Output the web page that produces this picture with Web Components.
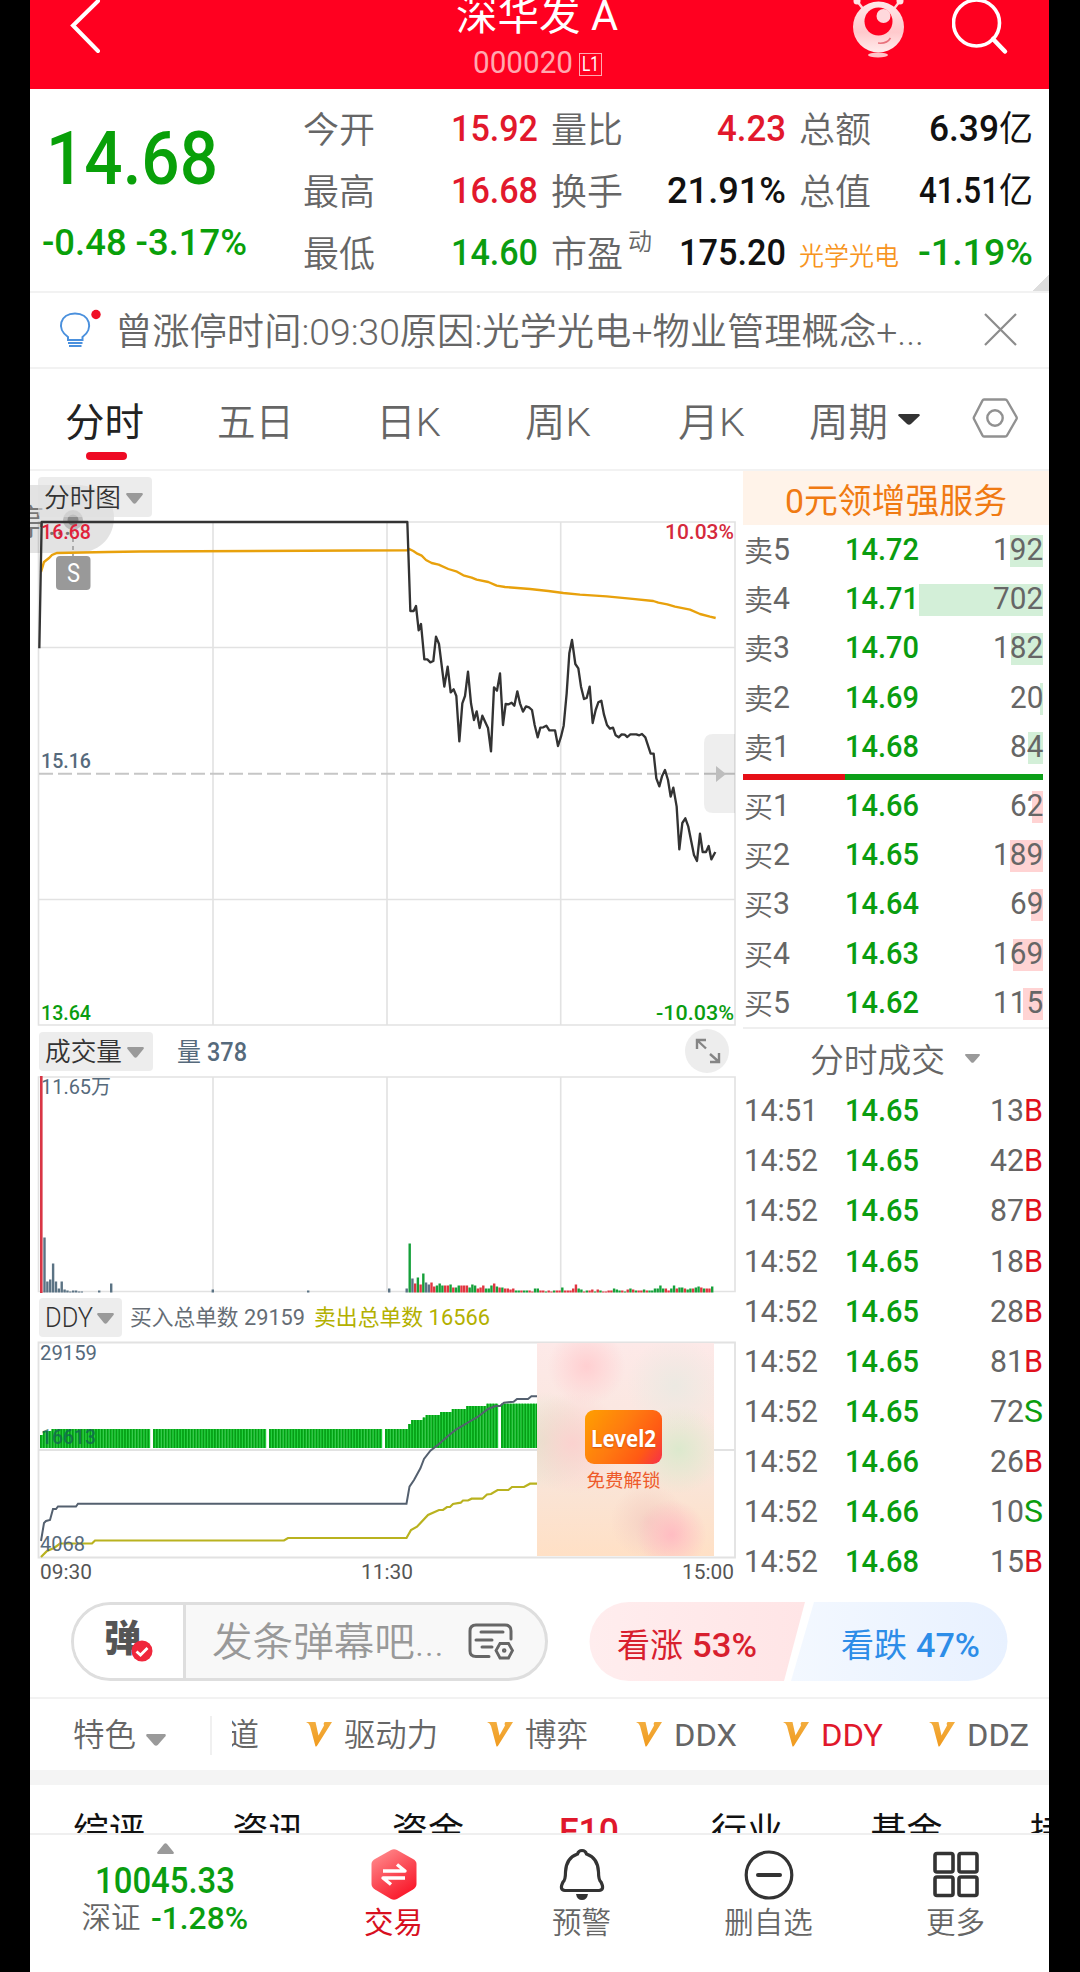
<!DOCTYPE html>
<html lang="zh-CN">
<head>
<meta charset="utf-8">
<title>深华发A 000020</title>
<style>
html, body { margin: 0; background: #000; }
body { width: 1080px; height: 1972px; overflow: hidden; }
</style>
</head>
<body>
<stock-page></stock-page>

<script>
const define = (name, html, setup) => {
    const template = document.createElement("template");
    template.innerHTML = html;
    customElements.define(name, class extends HTMLElement {
        constructor() {
            super();
            this.attachShadow({ mode: "open" });
        }
        connectedCallback() {
            if (this.shadowRoot.firstChild) return;
            this.shadowRoot.appendChild(template.content.cloneNode(true));
            if (setup) setup(this, this.shadowRoot);
        }
    });
};

define("fit-text", `
<style>
:host { display: inline-block; white-space: nowrap; text-align: left; flex: none; }
span { display: inline-block; transform-origin: 0 50%; }
</style>
<span><slot></slot></span>`, (host, root) => {
    const width = Number(host.getAttribute("w"));
    const span = root.querySelector("span");
    const natural = span.getBoundingClientRect().width;
    host.style.width = width + "px";
    if (natural) span.style.transform = `scaleX(${width / natural})`;
});

define("down-arrow", `
<style>
:host { display: block; flex: none; width: 17px; height: 11px; color: #9a9a9a; }
svg { display: block; width: 100%; height: 100%; }
</style>
<svg viewBox="0 0 17 11" preserveAspectRatio="none"><path d="M1 0H16Q17.500 .5 16.500 2L10 10Q8.500 11.500 7 10L.5 2Q-.5.5 1 0Z" fill="currentColor"/></svg>`);

define("app-header", `
<style>
:host { display: grid; grid-template-columns: 300px 1fr 300px; height: 89px; background: #ff0020; color: #fff; overflow: hidden; }
.back { padding-left: 38px; }
.mid { display: flex; flex-direction: column; align-items: center; margin-top: -9px; margin-left: -5px; }
.name { font-size: 42px; line-height: 50px; height: 50px; }
.code { display: flex; align-items: center; height: 42px; font-size: 32px; gap: 6px; color: #ffa9b0; }
.lv { box-sizing: border-box; width: 23px; height: 23px; border: 1px solid #ffa9b0; font-size: 20px; line-height: 21px; padding-left: 2px; margin-top: 4px; color: #fff; }
.right { display: flex; gap: 43px; padding-left: 100px; }
svg { display: block; flex: none; }
</style>
<div class="back"><svg width="40" height="60" fill="none" stroke="#fff" stroke-width="4"><path d="M30 1L5 25.500L30 51" stroke-linecap="round"/></svg></div>
<div class="mid">
  <div class="name"><fit-text w="162">深华发 A</fit-text></div>
  <div class="code"><fit-text w="100">000020</fit-text><div class="lv"><fit-text w="17">L1</fit-text></div></div>
</div>
<div class="right">
  <svg width="60" height="62" viewBox="849 0 60 62">
    <defs><linearGradient id="g" x1="0" y1="0" x2="0" y2="1"><stop stop-color="#ffe9ea"/><stop offset=".6" stop-color="#ffc9cc"/><stop offset="1" stop-color="#ffeded"/></linearGradient></defs>
    <path d="M857 1l7 9M900 1l-7 9" stroke="#ffd6d8" stroke-width="2.500"/>
    <circle cx="857" cy="1" r="3.500" fill="#ffe5e6"/><circle cx="900" cy="1" r="3.500" fill="#ffe5e6"/>
    <circle cx="878.500" cy="27" r="25.500" fill="url(#g)"/>
    <circle cx="878.500" cy="21.500" r="14" fill="#ff0020"/>
    <circle cx="883.500" cy="16" r="7" fill="#ffd8dc"/>
    <path d="M878 43Q887 44 890.500 38" stroke="#e8727c" stroke-width="1.500" fill="none"/>
    <ellipse cx="878" cy="55" rx="10" ry="2.500" fill="#ffc5c9"/>
  </svg>
  <svg width="58" height="58" viewBox="952 0 58 58" fill="none" stroke="#fff" stroke-width="3.600"><circle cx="976.500" cy="23" r="23"/><path d="M993 39L1005 51.500" stroke-linecap="round" stroke-width="4.500"/></svg>
</div>`);

define("quote-cell", `
<style>
:host { display: flex; justify-content: space-between; align-items: center; height: 62px; color: #666; font-size: 36px; }
.label { position: relative; top: 3px; font-weight: 350; }
.value { font-weight: 500; font-size: 37px; }
</style>
<span class="label"><slot name="label"></slot></span><span class="value"><slot></slot></span>`);

define("quote-panel", `
<style>
:host { position: relative; display: grid; grid-template-columns: 273px 235px 235px 234px; column-gap: 13px; box-sizing: border-box; height: 204px; border-bottom: 2px solid #f2f2f2; padding-top: 9px; }
.last { color: #09a009; padding-left: 13px; font-weight: 500; }
.price { font-size: 75px; line-height: 96px; height: 96px; padding: 11px 0 0 3px; margin-top: 1px; }
.diff { font-size: 37px; line-height: 50px; padding-top: 12px; margin-left: -1px; }
.red { color: #e2182c; } .green { color: #0a9d10; } .black { color: #111; }
.tip { position: relative; top: -17px; font-size: 24px; margin-left: 5px; line-height: 1; }
.sector { color: #f79420; font-size: 25px; position: relative; top: -2px; }
.corner { position: absolute; right: 0; bottom: 0; width: 16px; height: 16px; background: linear-gradient(135deg, transparent 50%, #ddd 50%); }
.c1, .c2, .c3 { margin: 0 13px 0 -13px; }
</style>
<div class="last">
  <div class="price"><fit-text w="172">14.68</fit-text></div>
  <div class="diff"><fit-text w="205">-0.48 -3.17%</fit-text></div>
</div>
<div class="c1">
  <quote-cell><span slot="label">今开</span><fit-text class="red" w="87">15.92</fit-text></quote-cell>
  <quote-cell><span slot="label">最高</span><fit-text class="red" w="87">16.68</fit-text></quote-cell>
  <quote-cell><span slot="label">最低</span><fit-text class="green" w="87">14.60</fit-text></quote-cell>
</div>
<div class="c2">
  <quote-cell><span slot="label">量比</span><fit-text class="red" w="69">4.23</fit-text></quote-cell>
  <quote-cell><span slot="label">换手</span><fit-text class="black" w="119">21.91%</fit-text></quote-cell>
  <quote-cell><span slot="label">市盈<span class="tip">动</span></span><fit-text class="black" w="107">175.20</fit-text></quote-cell>
</div>
<div class="c3">
  <quote-cell><span slot="label">总额</span><span class="black"><fit-text w="70">6.39</fit-text><fit-text w="34" style="font-size:35px;font-weight:400">亿</fit-text></span></quote-cell>
  <quote-cell><span slot="label">总值</span><span class="black"><fit-text w="80">41.51</fit-text><fit-text w="34" style="font-size:35px;font-weight:400">亿</fit-text></span></quote-cell>
  <quote-cell><span slot="label" class="sector">光学光电</span><fit-text class="green" w="115">-1.19%</fit-text></quote-cell>
</div>
<i class="corner"></i>`);

define("notice-bar", `
<style>
:host { display: flex; align-items: center; box-sizing: border-box; height: 76px; border-bottom: 2px solid #f2f2f2; padding-left: 29px; color: #666; font-size: 37px; font-weight: 350; }
svg { display: block; flex: none; }
.text { margin-left: 13px; padding-top: 6px; width: 869px; flex: none; }
</style>
<svg width="43" height="44" viewBox="59 309 43 44" fill="none"><path d="M68 341V338C56 330 60 314.500 75 314.500S94 330 82.500 338V341Z" stroke="#4a90dd" stroke-width="2"/><path d="M68 344H82.500M69 347H81.500" stroke="#4a90dd" stroke-width="2"/><circle cx="96" cy="315.500" r="4.700" fill="#f01026"/></svg>
<div class="text"><fit-text w="809">曾涨停时间:09:30原因:光学光电+物业管理概念+...</fit-text></div>
<svg width="34" height="34" stroke="#8c8c8c" stroke-width="2.200"><path d="M1 1L32 32M32 1L1 32"/></svg>`);

define("period-tabs", `
<style>
:host { display: flex; box-sizing: border-box; height: 102px; border-bottom: 2px solid #f2f2f2; color: #666; font-size: 39px; font-weight: 350; padding-left: 35px; align-items: center; line-height: 60px; padding-top: 8px; }
div { position: relative; flex: none; }
.on { color: #222; font-weight: 400; }
.on::after { content: ""; position: absolute; left: 21px; bottom: -7px; width: 41px; height: 8px; border-radius: 4px; background: #ee0a24; }
down-arrow { width: 22px; height: 11px; color: #333; margin: -8px 51px 0 10px; }
svg { flex: none; margin-top: -10px; }
</style>
<div class="on" style="width:152px"><fit-text w="79">分时</fit-text></div>
<div style="width:159px"><fit-text w="77">五日</fit-text></div>
<div style="width:149px"><fit-text w="65">日K</fit-text></div>
<div style="width:153px"><fit-text w="66">周K</fit-text></div>
<div style="width:131px"><fit-text w="67">月K</fit-text></div>
<div><fit-text w="79">周期</fit-text></div>
<down-arrow></down-arrow>
<svg width="48" height="44" viewBox="970 397 48 44" fill="none" stroke="#919191" stroke-width="2.400"><path d="M983 400.500H1004Q1005.500 400.500 1006 401.500L1015.500 418Q1016 419 1015.500 420L1006 436.500Q1005.500 437.500 1004 437.500H983Q982 437.500 981.500 436.500L973 420Q972.500 419 973 418L981.500 401.500Q982 400.500 983 400.500Z"/><circle cx="994" cy="419" r="7.700"/></svg>`);

define("pick-button", `
<style>
:host { display: flex; align-items: center; box-sizing: border-box; height: 39px; padding: 3px 9px 0 6px; gap: 5px; border-radius: 4px; background: #ededed; color: #333; font-size: 26px; font-weight: 350; flex: none; }
</style>
<slot></slot><down-arrow></down-arrow>`);

define("price-chart", `
<style>
:host { position: relative; display: block; height: 555px; }
.head { display: flex; height: 50px; padding: 6px 0 0 8px; box-sizing: border-box; position: relative; z-index: 1; }
pick-button { height: 40px; background: rgba(224,224,224,.6); }
svg { position: absolute; left: 0; top: 0; }
text { font-size: 20.500px; }
</style>
<div class="head"><pick-button><fit-text w="77">分时图</fit-text></pick-button></div>
<svg width="706" height="557" viewBox="30 471 706 557" fill="none">
  <g stroke="#e2e2e2" stroke-width="1.600"><path d="M38.500 522H735V1025H38.500ZM39 647.500H735M39 899.500H735M213 522V1025M387 522V1025M560.700 522V1025"/></g>
  <path d="M39 773.700H735" stroke="#c6c6c6" stroke-width="2" stroke-dasharray="14 5"/>
  <path d="M30 485H80C102 487 114 501 114 518S102 551 80 553H30Z" fill="#000" fill-opacity=".11"/>
  <g fill="#777"><text x="9" y="535" style="font-size:35px;font-weight:350">停</text><text x="48" y="535" style="font-size:30px">...</text></g>
  <circle cx="73" cy="520" r="10" fill="#999" fill-opacity=".55"/><circle cx="73" cy="520" r="5.500" fill="#8a8a8a"/>
  <path d="M73 530V556" stroke="#aaa" stroke-width="2" stroke-dasharray="4 4"/>
  <path d="M41 572L44 562L49 558L52 555L57 553L108 552L140 551.500L408 550.300V548.700" stroke="#e8a10c" stroke-width="2.400"/>
  <g transform="translate(380 500) scale(.33333)" stroke-width="7" stroke-linejoin="round">
    <path d="M85 146L100 153L112 161L125 167L138 180L155 189L176 194L205 207L231 215L250 226L275 233L290 239L325 246L350 257L375 261L450 267L505 273L550 279L600 284L680 289L750 296L820 303L835 308L862 313L885 320L930 329L960 342L990 350L1007 354" stroke="#e8a10c"/>
    <path d="M-1022 445L-1015 66H82L91 333H101L108 318L116 391L123 372L133 478H142L151 487L160 483L168 410L177 432L193 560L203 500L212 577L221 568L229 588L238 724L247 610L255 588L264 515L273 610L282 660L290 634L299 684L307 647L324 684L333 754L342 562L351 572L360 520L369 675L377 612L386 613L395 608L403 617L412 574L420 610L429 635L438 619L447 622L456 630L464 675L473 712L481 683L490 682L499 677L508 691H525L534 738L543 710L551 677L560 580L568 460L576 420L586 492L595 505L603 560L612 597L620 594L629 560L638 669L647 630L655 607L664 602L672 644L681 675L690 686L699 683L707 706L716 712L725 703L734 704L742 711L751 703H769L778 706L786 702L796 712L812 761H821L829 835L838 859L846 829L855 810L864 840L872 890L880 863L890 920L898 1048L907 969L916 955L925 980L942 1065L951 1083L960 1001L968 1056H978L986 1038L994 1078L1006 1056" stroke="#333"/>
  </g>
  <rect x="56" y="556" width="34.500" height="34" rx="4" fill="#999"/><text x="67" y="582" fill="#fff" style="font-size:25px" textLength="13" lengthAdjust="spacingAndGlyphs">S</text>
  <path d="M735 734H713Q704 734 704 743V804Q704 813 713 813H735Z" fill="#000" fill-opacity=".065"/><path d="M716 766L726 774L716 782Z" fill="#bdbdbd"/>
  <g font-weight="500">
    <text x="41" y="539" fill="#e0213a" textLength="50" lengthAdjust="spacingAndGlyphs">16.68</text>
    <text x="665" y="539" fill="#d5293c" textLength="69" lengthAdjust="spacingAndGlyphs">10.03%</text>
    <text x="41" y="768" fill="#566a7c" textLength="50" lengthAdjust="spacingAndGlyphs">15.16</text>
    <text x="41" y="1020" fill="#0a9d10" textLength="50" lengthAdjust="spacingAndGlyphs">13.64</text>
    <text x="656" y="1020" fill="#0a9d10" textLength="78" lengthAdjust="spacingAndGlyphs">-10.03%</text>
  </g>
</svg>`);

// one token for each minute of the afternoon: colour and height
const VOLUMES = "g49 s14 r9 g15 r8 g19 s10 s8 r10 r6 g7 g9 g7 r7 r7 g8 r5 g5 g7 r7 r7 r7 g5 g8 g7 r4 r5 r7 g4 g4 g7 r9 g6 r5 g5 r4 r4 r3 r4 g2 g2 r2 g2 g2 r2 r1 g4 g4 r2 r2 g1 r2 r1 g2 r2 r2 g5 r2 r2 r2 r4 r8 g4 g3 r1 g2 r2 r3 g1 r3 g2 r1 r1 r2 r2 g4 g3 g2 r2 g1 r3 g4 r3 g2 r2 r2 g3 r2 g2 g2 g4 g4 g7 g4 r4 r2 g4 g7 r4 g5 g5 r4 g3 g4 r4 g5 g6 r5 g4 r4 r4 g6";
const COLORS = { g: "#15a03a", r: "#e03540", s: "#5b7384" };

define("volume-chart", `
<style>
:host { display: block; height: 267px; }
.head { display: flex; align-items: center; height: 50px; padding: 0 14px 0 9px; color: #566a7c; font-size: 25px; }
.amount { flex: 1; margin: 3px 0 0 24px; }
.full { width: 44px; height: 44px; border-radius: 50%; background: #ededed; }
svg { display: block; }
</style>
<div class="head">
  <pick-button><fit-text w="77">成交量</fit-text></pick-button>
  <div class="amount"><fit-text w="24">量</fit-text> <fit-text w="40" style="font-weight:500">378</fit-text></div>
  <div class="full"><svg width="44" height="44" fill="none" stroke="#858585" stroke-width="2.400"><path d="M12 20V11H21M12.500 11.500L21 19.500M34 24V33H25M33.500 32.500L25 25"/></svg></div>
</div>
<svg width="706" height="217" viewBox="30 1076 706 217">
  <path d="M38.500 1077H735V1291.500H38.500ZM213 1077V1292M387 1077V1292M560.700 1077V1292" fill="none" stroke="#e2e2e2" stroke-width="1.600"/>
  <g id="bars"><rect x="40" y="1076" width="2.600" height="217" fill="#d93645"/></g>
  <text x="41" y="1094" fill="#566a7c" font-size="20.500" textLength="70" lengthAdjust="spacingAndGlyphs">11.65万</text>
</svg>`, (host, root) => {
    const group = root.querySelector("#bars");
    const bar = (x, height, color) => {
        group.innerHTML += `<rect x="${x}" y="${1292.5 - height}" width="2.400" height="${height}" fill="${color}"/>`;
    };
    [55, 11, 13, 29, 11, 4, 11, 3, 2, 1, 2, 2, 1, 1].forEach((h, i) => bar(43.3 + i * 2.87, h, COLORS.s));
    [[98, 2], [110, 9], [211.600, 3], [307, 2], [388, 4], [405.500, 4]].forEach(([x, h]) => bar(x, h, COLORS.s));
    const step = (711 - 408.5) / (VOLUMES.split(" ").length - 1);
    VOLUMES.split(" ").forEach((v, i) => bar(408.5 + i * step, Number(v.slice(1)), COLORS[v[0]]));
});

define("ddy-chart", `
<style>
:host { position: relative; display: block; height: 294px; }
.head { display: flex; align-items: center; height: 50px; margin-bottom: -2px; padding-left: 9px; font-size: 22px; color: #666d75; }
.head fit-text { margin-right: 9px; }
pick-button { margin-right: 8px; font-size: 27px; gap: 4px; padding-right: 8px; margin-top: -2px; }
.head pick-button fit-text { margin: 0; }
svg { display: block; }
.ad { position: absolute; left: 507px; top: 50px; width: 177px; height: 213px; display: flex; flex-direction: column; align-items: center; overflow: hidden;
  background: radial-gradient(circle at 28% 11%, #ffcfd1 0, transparent 17%), radial-gradient(circle at 76% 90%, #ffbcc2 0, transparent 15%), radial-gradient(circle at 63% 84%, #f5d0c4 0, transparent 18%), radial-gradient(circle at 20% 47%, #fbd2cf 0, transparent 28%), radial-gradient(circle at 80% 50%, #dce9cd 0, transparent 25%), radial-gradient(circle at 78% 20%, #ece9e2 0, transparent 22%), radial-gradient(circle at 4% 46%, #e2e5cd 0, transparent 24%), linear-gradient(#fde9e8, #f9e5da 60%, #ffe0c5); }
.logo { position: relative; left: -2px; margin-top: 67px; width: 77px; height: 54px; border-radius: 9px; background: linear-gradient(125deg, #ffa000, #ff7a10 45%, #ff5a14 75%, #f6304a); color: #fff; font: 700 23px/56px "Noto Sans", sans-serif; text-align: center; text-shadow: 0 1px 2px #d0500a; flex: none; }
.free { position: relative; left: -2px; margin-top: 5px; font-size: 18.500px; line-height: 24px; color: #ee5a2a; }
.axis { display: flex; justify-content: space-between; width: 694px; padding: 1px 0 0 10px; font-size: 20.500px; line-height: 24px; color: #555; }
</style>
<div class="head">
  <pick-button><fit-text w="48">DDY</fit-text></pick-button>
  <fit-text w="175">买入总单数 29159</fit-text><fit-text w="176" style="color:#b3b000">卖出总单数 16566</fit-text>
</div>
<svg width="706" height="218" viewBox="30 1341 706 218" fill="none">
  <path d="M38.500 1342.500H735V1557.500H38.500ZM39 1450H735" stroke="#e2e2e2" stroke-width="1.800"/>
  <g id="bars"></g>
  <path d="M41 1541L44 1523L46 1521L50 1520L53 1509H56L58 1506.500H76L78 1503.700H406.500L409.500 1486.700L414 1480L420.400 1468.300L424 1459L430.400 1450.700L439 1444L448 1436L456.400 1429.300L468 1422.500L478 1416.700L488 1409L495.400 1406H500L504 1402.700L513.600 1401.700L517 1399H528L531.400 1396.300H537" stroke="#54606f" stroke-width="2"/>
  <path d="M41 1557L47 1551L54 1548L60 1543.500H92L95 1540.500H284L288 1538H406.500L411 1530L417 1526.700L428 1515L439 1510H443L447 1507H450L453 1504L460.700 1502.700L463 1500.500H468L471.600 1498.700H482.400L487 1494.500L491 1494L497.600 1490H508.400L512 1487H524L530 1483.700H537" stroke="#b9b21f" stroke-width="2.200"/>
  <g fill="#566a7c" font-size="21">
    <text x="40" y="1360" textLength="57" lengthAdjust="spacingAndGlyphs">29159</text>
    <text x="41" y="1444" font-weight="500" fill="#136353" fill-opacity=".75" textLength="55" lengthAdjust="spacingAndGlyphs">16613</text>
    <text x="40" y="1551" textLength="45" lengthAdjust="spacingAndGlyphs">4068</text>
  </g>
</svg>
<div class="ad"><div class="logo"><fit-text w="65">Level2</fit-text></div><div class="free">免费解锁</div></div>
<div class="axis"><fit-text w="52">09:30</fit-text><fit-text w="52">11:30</fit-text><fit-text w="52">15:00</fit-text></div>`, (host, root) => {
    const steps = [[40, 1435], [43, 1431], [50, 1429], [408, 1424], [411, 1420], [423, 1417.5], [425, 1415], [439, 1412], [450, 1409], [467, 1406], [487, 1403.700]];
    let html = "";
    for (let x = 40; x < 536; x += 2.9) {
        if ([151.6, 267.6, 383.6, 499.6].some((gap) => Math.abs(x - gap) < 1.45)) continue;
        const top = steps.filter((s) => s[0] <= x + 1).pop()[1];
        html += `<rect x="${x}" y="${top}" width="2.900" height="${1448 - top}" fill="#22cf3c"/><rect x="${x}" y="${top}" width="1.700" height="${1448 - top}" fill="#049f14"/>`;
    }
    root.querySelector("#bars").innerHTML = html;
});

define("order-row", `
<style>
:host { position: relative; display: grid; grid-template-columns: 101px 1fr auto; align-items: center; height: 49.200px; font-size: 31px; color: #666; padding: 0 6px 0 1px; }
.bar { position: absolute; right: 6px; top: 10px; height: 32px; background: #d3efd8; }
:host([buy]) .bar { background: #ffd3d3; }
.price { color: #0a9d10; font-weight: 500; }
.price, .qty { position: relative; }
</style>
<i class="bar"></i><span class="name"></span><span class="price"></span><span class="qty"></span>`, (host, root) => {
    const [name, price, qty, bar] = host.getAttribute("data").split(",");
    root.querySelector(".bar").style.width = bar + "px";
    root.querySelector(".name").innerHTML = `<fit-text w="29" style="font-size:29px;font-weight:350;position:relative;top:2px">${name[0]}</fit-text><fit-text w="17">${name[1]}</fit-text>`;
    root.querySelector(".price").innerHTML = `<fit-text w="74">${price}</fit-text>`;
    root.querySelector(".qty").innerHTML = `<fit-text w="${qty.length * 16.7}">${qty}</fit-text>`;
});

define("order-book", `
<style>
:host { display: block; height: 558px; box-sizing: border-box; border-bottom: 2px solid #efefef; }
.promo { height: 54px; line-height: 61px; background: #fff3e9; color: #f07a12; text-align: center; font-size: 34px; font-weight: 400; }
.ratio { height: 6px; width: 300px; margin: 3px 0 1px; background: linear-gradient(90deg, #e60f17 102px, #0c9f18 102px); }
</style>
<div class="promo"><fit-text w="222">0元领增强服务</fit-text></div>
<div id="sell"></div><div class="ratio"></div><div id="buy"></div>`, (host, root) => {
    const fill = (id, attr, rows) => {
        root.querySelector(id).innerHTML = rows.map((r) => `<order-row ${attr} data="${r}"></order-row>`).join("");
    };
    fill("#sell", "", ["卖5,14.72,192,33", "卖4,14.71,702,124", "卖3,14.70,182,32", "卖2,14.69,20,3", "卖1,14.68,84,15"]);
    fill("#buy", "buy", ["买1,14.66,62,11", "买2,14.65,189,33", "买3,14.64,69,12", "买4,14.63,169,30", "买5,14.62,115,20"]);
});

define("trade-list", `
<style>
:host { display: block; }
.head { display: flex; align-items: center; height: 57px; padding: 7px 0 0 67px; gap: 20px; font-size: 33px; color: #666; font-weight: 350; box-sizing: border-box; }
.head down-arrow { width: 15px; height: 9px; margin-top: -6px; }
.row { display: grid; grid-template-columns: 101px 1fr auto 19px; align-items: center; height: 50.150px; font-size: 31.500px; color: #666; padding: 0 6px 0 1px; }
.price { color: #0a9d10; font-weight: 500; }
.B { color: #e0101c; } .S { color: #0a9d10; }
</style>
<div class="head"><fit-text w="135">分时成交</fit-text><down-arrow></down-arrow></div>
<div id="rows"></div>`, (host, root) => {
    const trades = ["14:51 14.65 13 B", "14:52 14.65 42 B", "14:52 14.65 87 B", "14:52 14.65 18 B", "14:52 14.65 28 B", "14:52 14.65 81 B", "14:52 14.65 72 S", "14:52 14.66 26 B", "14:52 14.66 10 S", "14:52 14.68 15 B"];
    root.querySelector("#rows").innerHTML = trades.map((t) => {
        const [time, price, qty, side] = t.split(" ");
        return `<div class="row"><fit-text w="74">${time}</fit-text><fit-text class="price" w="74">${price}</fit-text><fit-text w="34">${qty}</fit-text><fit-text class="${side}" w="19">${side}</fit-text></div>`;
    }).join("");
});

define("comment-bar", `
<style>
:host { display: flex; align-items: flex-start; height: 96px; }
.box { display: flex; box-sizing: border-box; width: 477px; height: 79px; margin: 1px 41px 0 41px; border: 3px solid #dedede; border-radius: 40px; overflow: hidden; background: #f8f8f8; }
.dan { position: relative; width: 109px; background: #fff; border-right: 3px solid #dedede; font-size: 37px; line-height: 70px; font-weight: 900; color: #555; flex: none; }
.dan fit-text { margin-left: 30px; }
.dan svg { position: absolute; left: 57px; top: 35px; }
.hint { display: flex; align-items: center; gap: 23px; padding: 2px 0 0 26px; font-size: 39.500px; font-weight: 350; color: #999; }
.hint svg { flex: none; margin-top: -1px; }
.vote { position: relative; display: flex; width: 420px; height: 80px; margin-top: 1px; font-size: 33px; align-items: center; }
.vote > svg { position: absolute; left: 0; top: 0; }
.vote span { position: relative; display: flex; gap: 9px; align-items: center; top: 4px; }
b { font-weight: 500; }
</style>
<div class="box">
  <div class="dan"><fit-text w="37">弹</fit-text><svg width="22" height="22"><circle cx="11" cy="11" r="10.500" fill="#f0273c"/><path d="M5.500 11.500L9.500 15L16.500 8" fill="none" stroke="#fff" stroke-width="2.800"/></svg></div>
  <div class="hint"><fit-text w="232">发条弹幕吧...</fit-text>
    <svg width="48" height="40" viewBox="467 1622 48 40" fill="none" stroke="#666" stroke-width="3"><path d="M489 1656.500H476Q470 1656.500 470 1651V1631Q470 1625 476 1625H505Q511 1625 511 1631V1639M481 1632H503M476 1640H492M482 1647H492" stroke-linecap="round"/><path d="M500 1643.500H508.500L512.500 1650.500L508.500 1658H500L496 1650.500Z" stroke-width="2.800"/><circle cx="504.200" cy="1650.500" r="1.300" stroke-width="2"/></svg>
  </div>
</div>
<div class="vote">
  <svg width="420" height="80"><defs><linearGradient id="r"><stop stop-color="#ffedee"/><stop offset="1" stop-color="#ffe5e6"/></linearGradient><linearGradient id="b"><stop stop-color="#f3f8ff"/><stop offset="1" stop-color="#e8f1ff"/></linearGradient></defs>
    <path d="M40 0H216L195 79H40A39.500 39.500 0 0 1 40 0Z" fill="url(#r)"/><path d="M225 0H379A39.500 39.500 0 0 1 379 79H202Z" fill="url(#b)"/></svg>
  <span style="margin-left:28px;color:#d8202e"><fit-text w="66">看涨</fit-text><b><fit-text w="65">53%</fit-text></b></span>
  <span style="margin-left:84px;color:#2d8de8"><fit-text w="66">看跌</fit-text><b><fit-text w="64">47%</fit-text></b></span>
</div>`);

define("feature-item", `
<style>
:host { display: flex; align-items: center; gap: 12px; flex: none; }
:host([on]) { color: #e0182c; }
</style>
<svg width="26" height="25"><defs><linearGradient id="v" x1="0" y1="0" x2="0" y2="1"><stop stop-color="#f3ad3e"/><stop offset="1" stop-color="#f09a1e"/></linearGradient></defs><path d="M0 0H9.500L12.500 13.500L18 3.500Q17 1 18.500 0H26L11.500 23Q10.500 25 9.500 24.500L4 4Q3 1 0 0Z" fill="url(#v)"/></svg>
<slot></slot>`);

define("feature-row", `
<style>
:host { display: flex; align-items: center; box-sizing: border-box; height: 73px; border-top: 2px solid #f2f2f2; color: #666; font-size: 32px; font-weight: 350; padding: 1px 0 0 43px; overflow: hidden; }
.l { font-weight: 400; }
down-arrow { width: 20px; height: 12px; margin: 9px 44px 0 10px; }
.sep { width: 2px; height: 39px; background: #f0f0f0; margin-right: 20px; }
.cut { width: 27px; overflow: hidden; display: flex; justify-content: flex-end; margin-right: 47px; }
</style>
<fit-text w="63">特色</fit-text><down-arrow></down-arrow><i class="sep"></i>
<div class="cut"><fit-text w="31">道</fit-text></div>
<feature-item style="margin-right:49px"><fit-text w="94">驱动力</fit-text></feature-item>
<feature-item style="margin-right:48px"><fit-text w="63">博弈</fit-text></feature-item>
<feature-item class="l" style="margin-right:46px"><fit-text w="63">DDX</fit-text></feature-item>
<feature-item class="l" on style="margin-right:46px"><fit-text w="62">DDY</fit-text></feature-item>
<feature-item class="l"><fit-text w="62">DDZ</fit-text></feature-item>`);

define("info-tabs", `
<style>
:host { display: flex; box-sizing: border-box; height: 63px; border-top: 15px solid #f4f4f4; overflow: hidden; padding-left: 43px; font-size: 36px; line-height: 42px; color: #111; font-weight: 400; }
div { width: 159.500px; flex: none; padding-top: 26px; }
.on { color: #e0182c; font-weight: 500; }
</style>
<div>综评</div><div>资讯</div><div>资金</div><div class="on"><fit-text w="60" style="margin-left:7px">F10</fit-text></div><div>行业</div><div>基金</div><div>持股</div>`);

define("nav-item", `
<style>
:host { display: flex; flex-direction: column; align-items: center; flex: none; font-size: 29.500px; font-weight: 350; color: #666; padding-top: 13px; }
:host([hot]) { color: #d8101f; font-weight: 400; }
span { line-height: 44px; }
</style>
<slot name="icon"></slot><span><slot></slot></span>`);

define("bottom-nav", `
<style>
:host { display: grid; grid-template-columns: 269px 189px 187px 187px 1fr; box-sizing: border-box; height: 140px; border-top: 2px solid #efefef; }
.index { display: flex; flex-direction: column; align-items: center; color: #0a9d10; font-weight: 500; padding-top: 8px; }
.index down-arrow { transform: rotate(180deg); margin-left: 2px; }
.num { font-size: 36.500px; line-height: 52px; margin-top: 1px; }
.sub { display: flex; align-items: center; gap: 10px; font-size: 32px; line-height: 30px; margin-top: -4px; }
.sub i { font-style: normal; font-size: 29.500px; font-weight: 350; color: #666; }
svg { display: block; }
</style>
<div class="index">
  <down-arrow></down-arrow>
  <div class="num"><fit-text w="140">10045.33</fit-text></div>
  <div class="sub"><i>深证</i><fit-text w="97">-1.28%</fit-text></div>
</div>
<nav-item hot>
  <svg slot="icon" width="46" height="53" viewBox="0 0 46 53"><defs><linearGradient id="h" x1=".2" y1="0" x2=".8" y2="1"><stop stop-color="#ff8a8c"/><stop offset=".5" stop-color="#fb4a55"/><stop offset="1" stop-color="#fa1024"/></linearGradient></defs><path d="M20 2Q23 .5 26 2L42 11Q45.500 13 45.500 16V36Q45.500 39 42 41.500L26 51Q23 52.500 20 51L4 41.500Q.5 39 .5 36V16Q.5 13 4 11Z" fill="url(#h)"/><path d="M12 23H34L26 16.500M34 30H12L20 36.500" fill="none" stroke="#fff" stroke-width="3.400" stroke-linejoin="round"/></svg>
  交易</nav-item>
<nav-item>
  <svg slot="icon" width="46" height="53" viewBox="0 0 46 53" fill="none"><path d="M23 2.500Q26.500 2.500 27.500 6Q39 10 39.500 24Q39.500 32 42 34Q46 42 40 42.500H6Q0 42 4 34Q6.500 32 6.500 24Q7 10 18.500 6Q19.500 2.500 23 2.500Z" stroke="#333" stroke-width="3.200"/><path d="M17 46H29Q28 52 23 52T17 46Z" fill="#333"/></svg>
  预警</nav-item>
<nav-item>
  <svg slot="icon" width="50" height="53" fill="none" stroke="#333"><ellipse cx="25" cy="27" rx="22.800" ry="23" stroke-width="3.200"/><path d="M14 27H36" stroke-width="4" stroke-linecap="round"/></svg>
  删自选</nav-item>
<nav-item>
  <svg slot="icon" width="46" height="53" fill="none" stroke="#333" stroke-width="3.600"><rect x="2" y="5.500" width="18" height="18.500" rx="2"/><rect x="26" y="5.500" width="18" height="18.500" rx="2"/><rect x="2" y="29" width="18" height="18.500" rx="2"/><rect x="26" y="29" width="18" height="18.500" rx="2"/></svg>
  更多</nav-item>`);

define("stock-page", `
<style>
:host { display: block; box-sizing: border-box; width: 1019px; height: 1972px; margin-left: 30px; background: #fff; overflow: hidden; font-family: Roboto, "Noto Sans CJK SC", sans-serif; line-height: 1.2; }
.main { display: grid; grid-template-columns: 713px 306px; height: 1130px; }
</style>
<app-header></app-header>
<quote-panel></quote-panel>
<notice-bar></notice-bar>
<period-tabs></period-tabs>
<div class="main">
  <div><price-chart></price-chart><volume-chart></volume-chart><ddy-chart></ddy-chart></div>
  <div><order-book></order-book><trade-list></trade-list></div>
</div>
<comment-bar></comment-bar>
<feature-row></feature-row>
<info-tabs></info-tabs>
<bottom-nav></bottom-nav>`);
</script>
</body>
</html>
